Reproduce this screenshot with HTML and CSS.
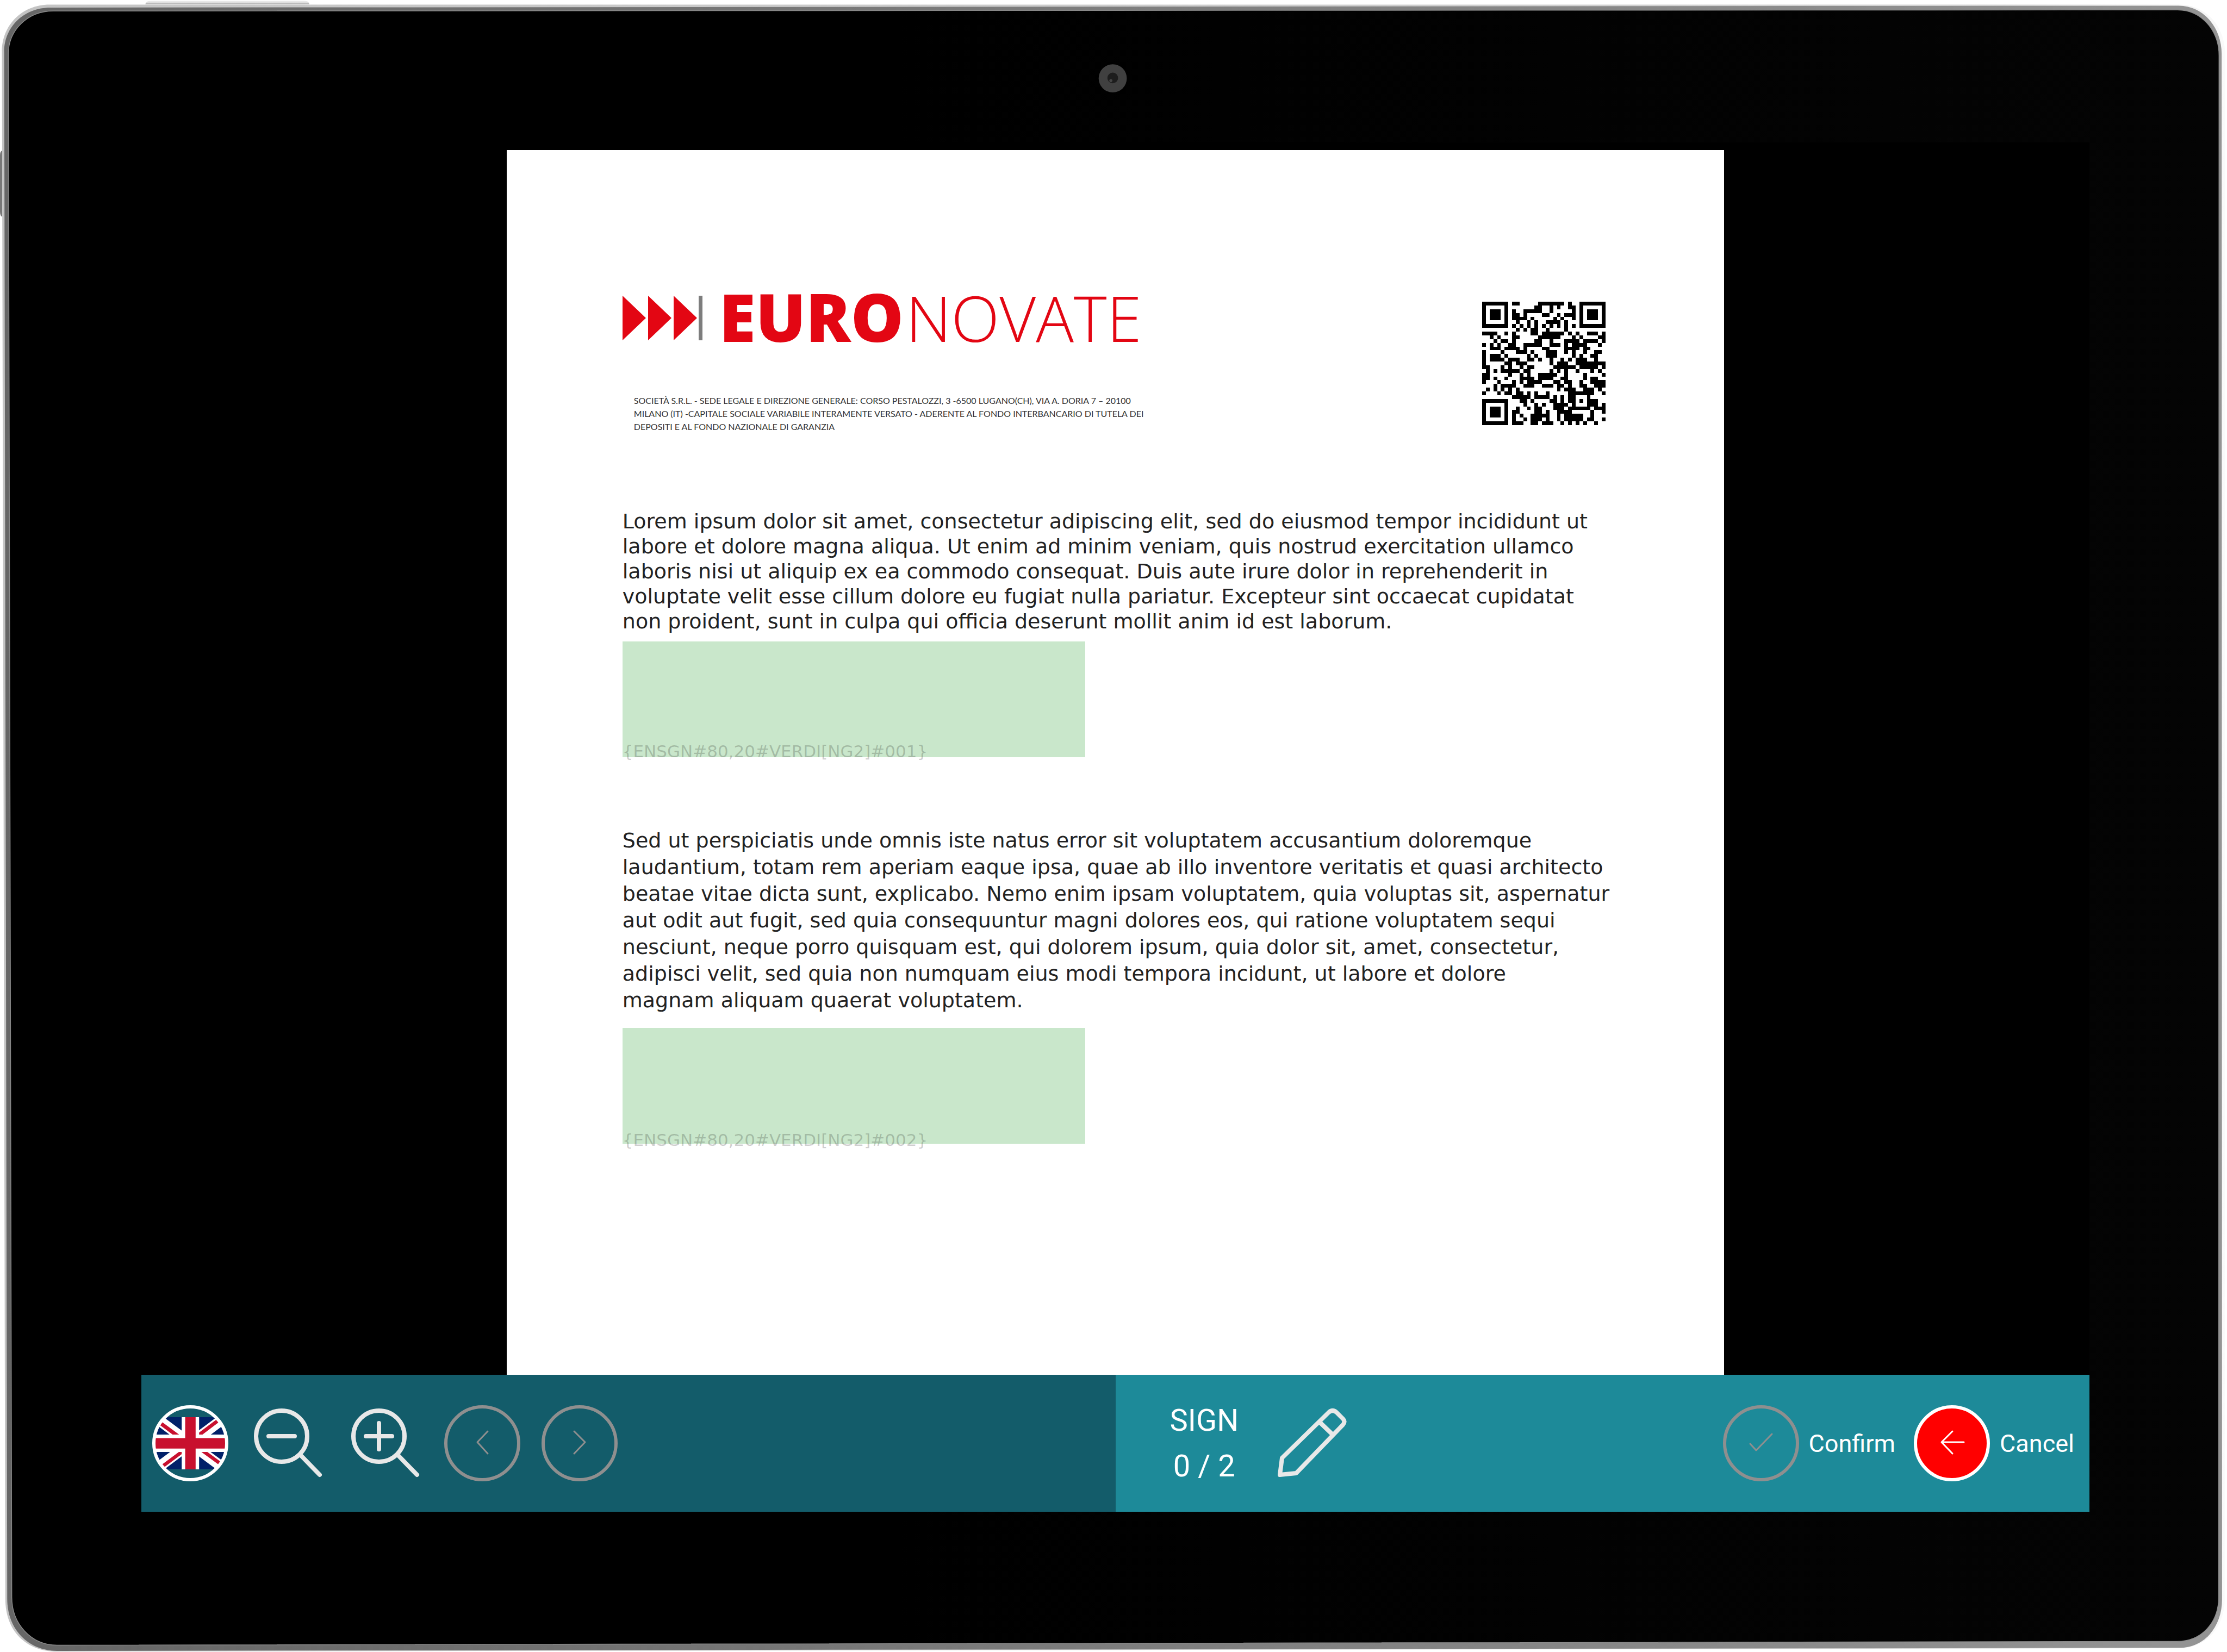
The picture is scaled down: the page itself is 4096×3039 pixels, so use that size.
FILE: index.html
```html
<!DOCTYPE html>
<html lang="en">
<head>
<meta charset="utf-8">
<meta name="viewport" content="width=device-width, initial-scale=1">
<title>Euronovate – Sign document</title>
<link rel="stylesheet" href="styles.css">
</head>
<body>
<div class="device">
  <svg class="frame" viewBox="0 0 5854 4344" preserveAspectRatio="none" aria-hidden="true">
    <defs>
      <linearGradient id="rim" x1="0" x2="1" y1="0" y2="0">
        <stop offset="0" stop-color="#c4c4c4"/>
        <stop offset=".9" stop-color="#d2d2d2"/>
        <stop offset="1" stop-color="#fafafa"/>
      </linearGradient>
      <linearGradient id="edge" x1="0" x2="1" y1="0" y2="0">
        <stop offset="0" stop-color="#666"/>
        <stop offset="1" stop-color="#949494"/>
      </linearGradient>
      <linearGradient id="glass" x1="0" x2="1" y1="0" y2="0">
        <stop offset=".4" stop-color="#000"/>
        <stop offset="1" stop-color="#040404"/>
      </linearGradient>
      <linearGradient id="key" x1="0" x2="0" y1="0" y2="1">
        <stop offset="0" stop-color="#eee"/>
        <stop offset=".6" stop-color="#ddd"/>
        <stop offset="1" stop-color="#9a9a9a"/>
      </linearGradient>
    </defs>
    <path fill="url(#key)" d="M382 11Q384 2 396 2H800Q812 2 813 11Z"/>
    <path fill="#777" d="M6 396Q0 398 0 408V556Q0 568 6 570Z"/>
    <path fill="url(#rim)" d="M130 12H5726C5800 12 5849 70 5849 142L5848 4206C5848 4276 5802 4334 5728 4334L150 4343C70 4343 14 4290 14 4204L5 136C5 66 58 12 130 12Z"/>
    <path fill="url(#edge)" d="M132 20L5726 15C5794 15 5840 74 5840 142L5841 4206C5841 4274 5798 4333 5728 4333L150 4341C76 4341 19 4286 19 4204L11 136C11 70 64 20 132 20Z"/>
    <path fill="url(#glass)" stroke="#8a8a8a" stroke-width="2" d="M140 29L5724 26C5788 26 5833 82 5833 146L5832 4200C5832 4266 5788 4316 5722 4316L150 4326C82 4326 31 4270 31 4200L22 142C22 80 72 29 140 29Z"/>
    <circle cx="2925" cy="206" r="37" fill="#404040"/>
    <circle cx="2925" cy="205" r="14" fill="#1d1d1d"/>
    <circle cx="2920" cy="212" r="4" fill="#444"/>
  </svg>

  <main class="screen">
    <div class="viewer">
      <article class="sheet">
        <header class="letterhead">
          <div class="brand">
            <div class="logo">
              <svg class="logo-mark" viewBox="0 0 148 82" aria-hidden="true">
                <path fill="#e30613" d="M0 0L43 41L0 82ZM47 0L90 41L47 82ZM94 0L137 41L94 82Z"/>
                <path fill="#7d7d7d" d="M140 0h7v82h-7z"/>
              </svg>
              <span class="logo-text"><b>EURO</b><span>NOVATE</span></span>
            </div>
            <p class="legal">SOCIETÀ S.R.L. - SEDE LEGALE E DIREZIONE GENERALE: CORSO PESTALOZZI, 3 -6500 LUGANO(CH), VIA A. DORIA 7 – 20100<br>MILANO (IT) -CAPITALE SOCIALE VARIABILE INTERAMENTE VERSATO - ADERENTE AL FONDO INTERBANCARIO DI TUTELA DEI<br>DEPOSITI E AL FONDO NAZIONALE DI GARANZIA</p>
          </div>
          <svg class="qr" viewBox="0 0 33 33" role="img" aria-label="QR code">
            <path d="M0 .5h7M8 .5h2M15 .5h7M23 .5h1M26 .5h7
M0 1.5h1M6 1.5h1M14 1.5h2M18 1.5h1M20 1.5h1M23 1.5h2M26 1.5h1M32 1.5h1
M0 2.5h1M2 2.5h3M6 2.5h1M8 2.5h1M11 2.5h5M18 2.5h1M24 2.5h1M26 2.5h1M28 2.5h3M32 2.5h1
M0 3.5h1M2 3.5h3M6 3.5h1M8 3.5h2M11 3.5h1M16 3.5h2M20 3.5h1M22 3.5h3M26 3.5h1M28 3.5h3M32 3.5h1
M0 4.5h1M2 4.5h3M6 4.5h1M8 4.5h4M13 4.5h1M19 4.5h1M21 4.5h1M24 4.5h1M26 4.5h1M28 4.5h3M32 4.5h1
M0 5.5h1M6 5.5h1M9 5.5h1M12 5.5h1M14 5.5h1M17 5.5h4M22 5.5h1M26 5.5h1M32 5.5h1
M0 6.5h7M8 6.5h1M10 6.5h1M12 6.5h1M14 6.5h1M16 6.5h1M18 6.5h1M20 6.5h1M22 6.5h1M24 6.5h1M26 6.5h7
M9 7.5h1M11 7.5h1M13 7.5h2M17 7.5h1M22 7.5h1
M0 8.5h4M6 8.5h1M8 8.5h1M13 8.5h2M16 8.5h6M23 8.5h1M25 8.5h1M28 8.5h3M32 8.5h1
M2 9.5h1M4 9.5h1M8 9.5h2M15 9.5h6M24 9.5h1M26 9.5h1M31 9.5h2
M3 10.5h1M5 10.5h2M8 10.5h1M14 10.5h2M18 10.5h1M22 10.5h4M27 10.5h4M32 10.5h1
M0 11.5h1M2 11.5h1M4 11.5h1M7 11.5h2M11 11.5h5M18 11.5h3M22 11.5h1M24 11.5h4M31 11.5h1
M2 12.5h3M6 12.5h4M11 12.5h1M16 12.5h2M22 12.5h4M27 12.5h2
M0 13.5h1M5 13.5h1M9 13.5h3M13 13.5h1M17 13.5h3M22 13.5h1M24 13.5h1M27 13.5h1M30 13.5h2
M0 14.5h1M2 14.5h3M6 14.5h1M12 14.5h1M14 14.5h1M17 14.5h3M24 14.5h1M26 14.5h1M29 14.5h2
M0 15.5h1M2 15.5h4M7 15.5h3M12 15.5h2M15 15.5h1M18 15.5h1M21 15.5h1M23 15.5h1M25 15.5h3M30 15.5h1
M0 16.5h1M6 16.5h2M9 16.5h3M18 16.5h1M20 16.5h3M25 16.5h8
M0 17.5h2M5 17.5h1M7 17.5h1M10 17.5h1M12 17.5h2M19 17.5h6M26 17.5h5M32 17.5h1
M1 18.5h1M3 18.5h1M5 18.5h5M11 18.5h2M18 18.5h1M20 18.5h1M22 18.5h1M25 18.5h1M29 18.5h1M31 18.5h1
M0 19.5h2M7 19.5h1M10 19.5h1M12 19.5h1M15 19.5h5M22 19.5h1M27 19.5h1M32 19.5h1
M0 20.5h2M3 20.5h1M6 20.5h1M10 20.5h4M15 20.5h4M21 20.5h2M27 20.5h1M29 20.5h2
M0 21.5h1M4 21.5h1M8 21.5h1M10 21.5h1M12 21.5h4M19 21.5h2M22 21.5h2M26 21.5h1M29 21.5h4
M3 22.5h1M5 22.5h4M11 22.5h3M16 22.5h3M20 22.5h2M23 22.5h1M26 22.5h2M30 22.5h3
M1 23.5h1M3 23.5h1M5 23.5h1M7 23.5h1M9 23.5h1M20 23.5h1M22 23.5h3M27 23.5h3M31 23.5h1
M0 24.5h1M4 24.5h1M6 24.5h2M9 24.5h2M12 24.5h1M14 24.5h1M17 24.5h1M23 24.5h7M32 24.5h1
M8 25.5h5M14 25.5h4M19 25.5h1M21 25.5h1M23 25.5h2M28 25.5h1
M0 26.5h7M10 26.5h2M13 26.5h1M18 26.5h2M21 26.5h1M23 26.5h2M26 26.5h1M28 26.5h3
M0 27.5h1M6 27.5h1M11 27.5h1M14 27.5h1M16 27.5h1M19 27.5h4M24 27.5h1M28 27.5h3M32 27.5h1
M0 28.5h1M2 28.5h3M6 28.5h1M9 28.5h1M12 28.5h1M14 28.5h2M19 28.5h3M23 28.5h6M30 28.5h3
M0 29.5h1M2 29.5h3M6 29.5h1M8 29.5h2M14 29.5h2M17 29.5h1M20 29.5h4M29 29.5h1M32 29.5h1
M0 30.5h1M2 30.5h3M6 30.5h1M8 30.5h1M10 30.5h1M13 30.5h5M20 30.5h1M22 30.5h5M29 30.5h1
M0 31.5h1M6 31.5h1M8 31.5h1M11 31.5h1M13 31.5h3M17 31.5h1M20 31.5h1M22 31.5h5M28 31.5h2M32 31.5h1
M0 32.5h7M8 32.5h3M13 32.5h2M16 32.5h3M21 32.5h1M23 32.5h1M25 32.5h1M27 32.5h1M30 32.5h1"/>
          </svg>
        </header>

        <p class="para">Lorem ipsum dolor sit amet, consectetur adipiscing elit, sed do eiusmod tempor incididunt ut<br>labore et dolore magna aliqua. Ut enim ad minim veniam, quis nostrud exercitation ullamco<br>laboris nisi ut aliquip ex ea commodo consequat. Duis aute irure dolor in reprehenderit in<br>voluptate velit esse cillum dolore eu fugiat nulla pariatur. Excepteur sint occaecat cupidatat<br>non proident, sunt in culpa qui officia deserunt mollit anim id est laborum.</p>
        <button type="button" class="sign-field">{ENSGN#80,20#VERDI[NG2]#001}</button>

        <p class="para para-loose">Sed ut perspiciatis unde omnis iste natus error sit voluptatem accusantium doloremque<br>laudantium, totam rem aperiam eaque ipsa, quae ab illo inventore veritatis et quasi architecto<br>beatae vitae dicta sunt, explicabo. Nemo enim ipsam voluptatem, quia voluptas sit, aspernatur<br>aut odit aut fugit, sed quia consequuntur magni dolores eos, qui ratione voluptatem sequi<br>nesciunt, neque porro quisquam est, qui dolorem ipsum, quia dolor sit, amet, consectetur,<br>adipisci velit, sed quia non numquam eius modi tempora incidunt, ut labore et dolore<br>magnam aliquam quaerat voluptatem.</p>
        <button type="button" class="sign-field sign-field-low">{ENSGN#80,20#VERDI[NG2]#002}</button>
      </article>
    </div>

    <footer class="toolbar">
      <div class="tools">
        <button type="button" class="round" aria-label="Language: English">
          <svg viewBox="0 0 140 140" aria-hidden="true">
            <defs><clipPath id="disc"><circle cx="70" cy="70" r="67"/></clipPath></defs>
            <g clip-path="url(#disc)">
              <svg x="6" y="22" width="128" height="96" viewBox="0 0 640 480">
                <path fill="#012169" d="M0 0h640v480H0z"/>
                <path fill="#fff" d="m75 0 244 181L562 0h78v62L400 241l240 178v61h-80L320 301 81 480H0v-60l239-178L0 64V0z"/>
                <path fill="#c8102e" d="m424 281 216 159v40L369 281zm-184 20 6 35L54 480H0zM640 0v3L391 191l2-44L590 0zM0 0l239 176h-60L0 42z"/>
                <path fill="#fff" d="M241 0v480h160V0zM0 160v160h640V160z"/>
                <path fill="#c8102e" d="M0 193v96h640v-96zM273 0v480h96V0z"/>
              </svg>
            </g>
            <circle class="ring" cx="70" cy="70" r="67"/>
          </svg>
        </button>
        <button type="button" class="round soft" aria-label="Zoom out">
          <svg viewBox="0 0 140 140" aria-hidden="true">
            <g class="thick"><circle cx="59" cy="57" r="47"/><path d="M35 57h48M95 93l34 35"/></g>
          </svg>
        </button>
        <button type="button" class="round soft" aria-label="Zoom in">
          <svg viewBox="0 0 140 140" aria-hidden="true">
            <g class="thick"><circle cx="59" cy="57" r="47"/><path d="M35 57h48M59 33v48M95 93l34 35"/></g>
          </svg>
        </button>
        <button type="button" class="round" aria-label="Previous page" disabled>
          <svg viewBox="0 0 140 140" aria-hidden="true">
            <circle class="ring" cx="70" cy="70" r="67"/>
            <path class="thin" d="M80 48L61 68l19 21"/>
          </svg>
        </button>
        <button type="button" class="round" aria-label="Next page" disabled>
          <svg viewBox="0 0 140 140" aria-hidden="true">
            <circle class="ring" cx="70" cy="70" r="67"/>
            <path class="thin" d="M60 48l20 20-20 21"/>
          </svg>
        </button>
      </div>

      <div class="actions">
        <div class="counter"><span>SIGN</span><span>0 / 2</span></div>
        <button type="button" class="round soft" aria-label="Sign">
          <svg viewBox="0 0 140 140" aria-hidden="true">
            <path class="thick" d="M15 97L101 13Q108 7 115 13L127 25Q132 30 127 36L41 125L11 128ZM84 31L108 54"/>
          </svg>
        </button>
        <div class="decisions">
          <button type="button" class="labelled" disabled>
            <svg viewBox="0 0 140 140" aria-hidden="true">
              <circle class="ring" cx="70" cy="70" r="67"/>
              <path class="thin" d="M50 71l11 12 29-30"/>
            </svg>
            <span>Confirm</span>
          </button>
          <button type="button" class="labelled">
            <svg viewBox="0 0 140 140" aria-hidden="true">
              <circle class="ring" cx="70" cy="70" r="67" fill="#f00"/>
              <path class="thin" d="M71 48L51 68l20 21M52 68h40"/>
            </svg>
            <span>Cancel</span>
          </button>
        </div>
      </div>
    </footer>
  </main>
</div>
</body>
</html>
```
FILE: styles.css
```css
* {
  box-sizing: border-box;
}

body {
  margin: 0;
  background: #fff;
  font-family: Roboto, "Liberation Sans", sans-serif;
}

p {
  margin: 0;
}

button {
  margin: 0;
  padding: 0;
  border: 0;
  background: none;
  font: inherit;
  cursor: pointer;
}

button:disabled {
  cursor: default;
}

/* Tablet body */
.device {
  position: relative;
  display: flex;
  min-height: 100vh;
  padding: 262px 253px 258px 260px;
}

.frame {
  position: absolute;
  inset: 0;
  width: 100%;
  height: 100%;
}

.screen {
  position: relative;
  display: flex;
  flex: 1;
  flex-direction: column;
  min-width: 0;
  background: #000;
}

/* Document */
.viewer {
  display: flex;
  flex: 1;
  justify-content: center;
  padding-top: 14px;
}

.sheet {
  width: 62.5%;
  padding: 268px 212px 0 213px;
  background: #fff;
  color: #222;
  font-family: "DejaVu Sans", sans-serif;
}

.letterhead {
  display: flex;
  justify-content: space-between;
  padding-right: 6px;
}

.logo {
  display: flex;
  gap: 30px;
}

.logo-mark {
  width: 148px;
  height: 82px;
}

.logo-text {
  color: #e30613;
  font: 300 116px/76px "Open Sans", sans-serif;
  white-space: nowrap;
}

.logo-text b {
  margin-right: 4px;
  font-size: 122px;
  font-weight: 800;
}

.legal {
  margin: 99px 0 0 21px;
  color: #333;
  font: 16px/24px Lato, sans-serif;
  white-space: nowrap;
}

.qr {
  width: 227px;
  height: 227px;
  margin-top: 11px;
  stroke: #000;
  stroke-width: 1;
  shape-rendering: crispEdges;
}

.para {
  margin-top: 139px;
  font-size: 38px;
  line-height: 46px;
  white-space: nowrap;
}

.para-loose {
  margin-top: 129px;
  line-height: 49px;
}

.sign-field {
  display: flex;
  align-items: flex-start;
  width: 851px;
  height: 213px;
  margin-top: 14px;
  padding-top: 184px;
  background: #c9e7cb;
  color: rgba(0, 0, 0, 0.2);
  font-size: 31px;
  line-height: 36px;
  white-space: nowrap;
}

.sign-field-low {
  margin-top: 26px;
  padding-top: 188px;
}

/* Bottom bar */
.toolbar {
  display: grid;
  grid-template-columns: 1fr 1fr;
  height: 252px;
  color: #fff;
}

.tools,
.actions,
.decisions,
.labelled {
  display: flex;
  align-items: center;
}

.tools {
  gap: 39px;
  padding: 0 20px;
  background: #135c6a;
}

.actions {
  padding: 0 28px 0 100px;
  background: #1d8a99;
}

.round,
.labelled {
  color: #fff;
}

.round > svg,
.labelled > svg {
  display: block;
  width: 140px;
  height: 140px;
  fill: none;
}

.soft {
  color: #e8e8e8;
}

.round:disabled,
.labelled:disabled svg {
  color: #8f8f8f;
}

.ring {
  stroke: currentColor;
  stroke-width: 6;
}

.thick,
.thin {
  fill: none;
  stroke: currentColor;
  stroke-width: 8;
  stroke-linecap: round;
  stroke-linejoin: round;
}

.thin {
  stroke-width: 3;
}

.counter {
  display: flex;
  flex-direction: column;
  align-items: center;
  margin-right: 65px;
  font-size: 56px;
  line-height: 84px;
}

.decisions {
  gap: 34px;
  margin-left: auto;
}

.labelled {
  gap: 18px;
  font-size: 45px;
}
```
